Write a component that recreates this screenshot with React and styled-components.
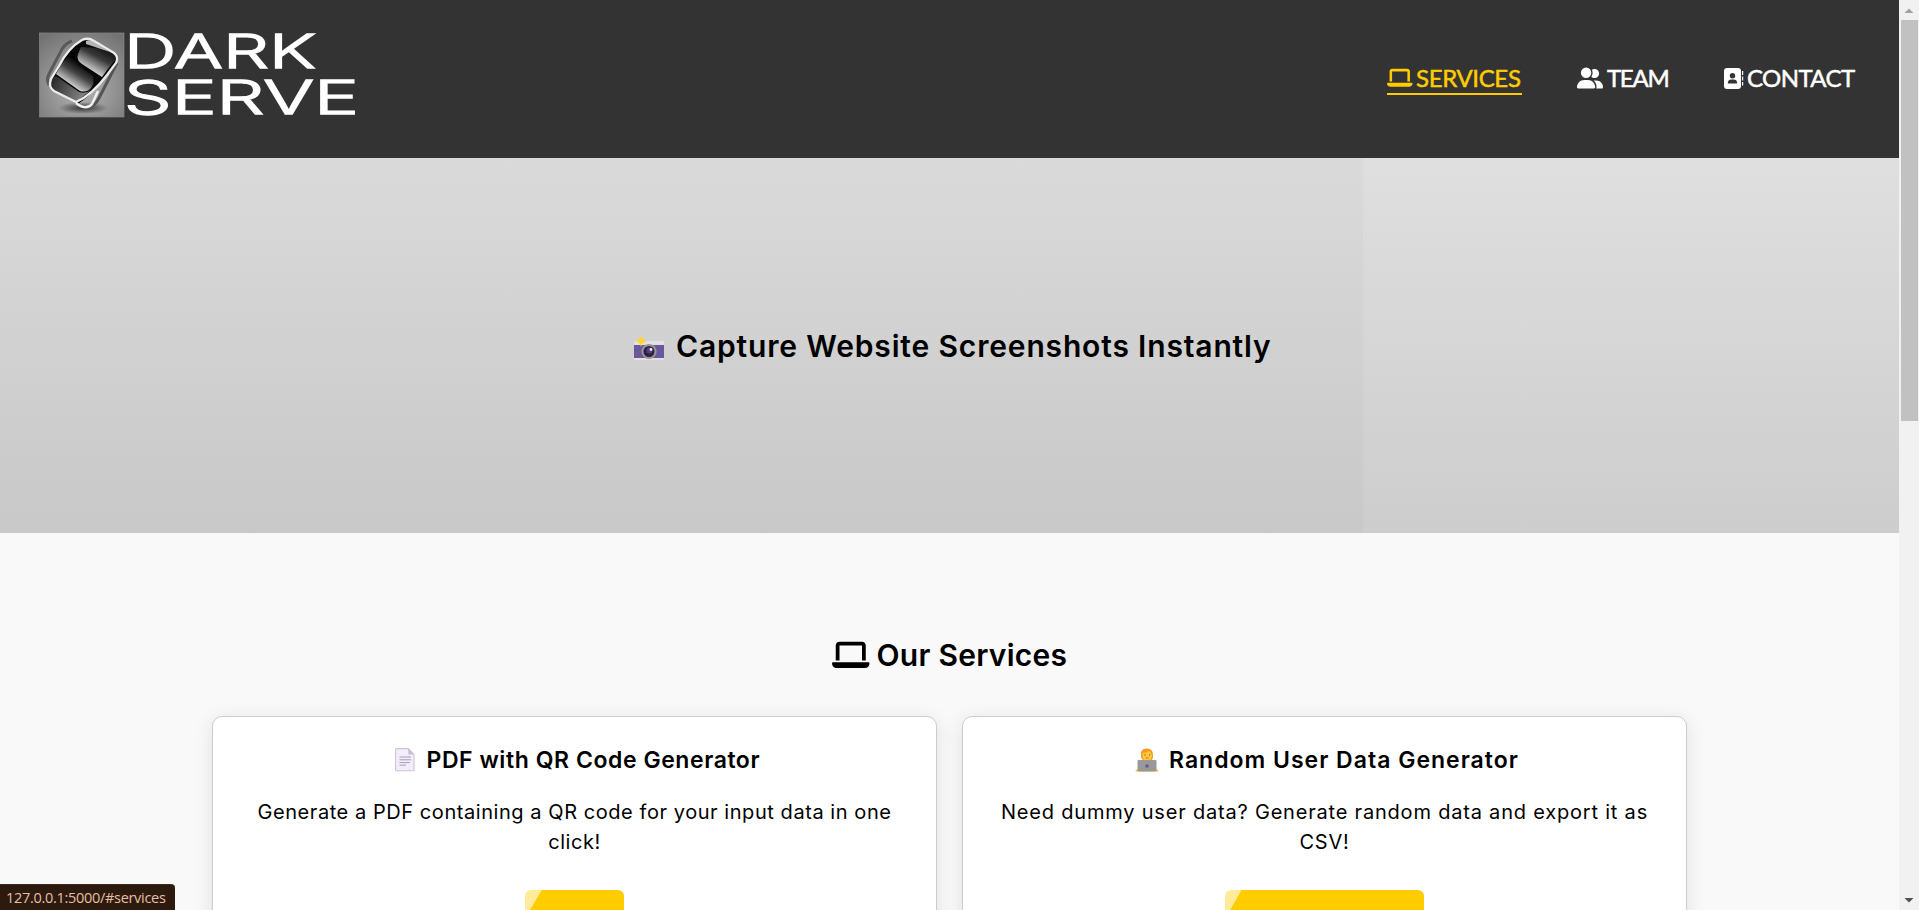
import React from "react";
import styled, { createGlobalStyle } from "styled-components";
import { FaLaptop, FaUserGroup } from "react-icons/fa6";

const GlobalStyle = createGlobalStyle`
  *, *::before, *::after { box-sizing: border-box; }
  body { margin: 0; background: #f9f9f9; color: #000; overflow: hidden; font-family: Inter, "Open Sans", sans-serif; }
  h1, h2, h3, p { margin: 0; }
  svg { display: block; flex: none; }
`;

const Shell = styled.div`
  display: flex;
  height: 910px;
  overflow: hidden;
`;

const Page = styled.div`
  position: relative;
  flex: 1;
  min-width: 0;
  height: 910px;
  overflow: hidden;
`;

const Header = styled.header`
  display: flex;
  justify-content: space-between;
  align-items: flex-start;
  height: 158px;
  padding: 19px 44px 0 35px;
  background: #333;
`;

const Nav = styled.nav`
  display: flex;
  gap: 55px;
  padding-top: 45px;
`;

const NavLink = styled.a`
  display: flex;
  align-items: center;
  width: ${(p) => p.$width}px;
  height: 31px;
  padding-bottom: 1px;
  color: ${(p) => (p.$active ? "#ffcc00" : "#fff")};
  border-bottom: 2px solid ${(p) => (p.$active ? "#ffcc00" : "transparent")};
  font: 400 24px/28px Lato, sans-serif;
  -webkit-text-stroke: 0.5px currentColor;
  letter-spacing: ${(p) => p.$spacing}px;
  white-space: nowrap;
`;

const NavIcon = styled.span`
  display: flex;
  width: ${(p) => p.$width}px;
  margin-right: 4px;
  -webkit-text-stroke: 0;
`;

const Hero = styled.section`
  display: flex;
  align-items: center;
  justify-content: center;
  height: 375px;
  background:
    linear-gradient(rgba(0, 0, 0, 0.022), rgba(0, 0, 0, 0.022)) 0 0 / 1363px 100% no-repeat,
    linear-gradient(#dfdfdf, #cdcdcd);
`;

const HeroTitle = styled.h1`
  display: flex;
  align-items: center;
  gap: 11px;
  width: 637px;
  margin-left: 4px;
  font-size: 30px;
  line-height: 44px;
  font-weight: 600;
  letter-spacing: 0.84px;
  white-space: nowrap;
`;

const Services = styled.section`
  display: flex;
  flex-direction: column;
  align-items: center;
  padding-top: 100px;
`;

const SectionTitle = styled.h2`
  display: flex;
  align-items: center;
  gap: 7px;
  width: 235px;
  margin-bottom: 39px;
  font-size: 30px;
  line-height: 44px;
  font-weight: 600;
  letter-spacing: 0.25px;
  white-space: nowrap;
`;

const Cards = styled.div`
  display: grid;
  grid-template-columns: 724.4px 724.4px;
  gap: 25.6px;
`;

const Card = styled.article`
  display: flex;
  flex-direction: column;
  align-items: center;
  height: 290px;
  padding-top: 27px;
  background: #fff;
  border: 1px solid #ccc;
  border-radius: 10px;
  box-shadow: 0 4px 20px rgba(0, 0, 0, 0.1);
`;

const CardTitle = styled.h3`
  display: flex;
  align-items: center;
  gap: ${(p) => p.$gap}px;
  width: ${(p) => p.$width}px;
  margin-bottom: 21px;
  font-size: 23px;
  line-height: 32px;
  font-weight: 600;
  letter-spacing: ${(p) => p.$spacing}px;
  white-space: nowrap;
`;

const CardText = styled.p`
  text-align: center;
  font-size: 20px;
  line-height: 30px;
  letter-spacing: ${(p) => p.$spacing}px;
  white-space: nowrap;
`;

const Button = styled.button`
  display: flex;
  justify-content: center;
  width: ${(p) => p.$width}px;
  height: 55px;
  flex: none;
  margin-top: 33px;
  padding: 14.5px 0 0;
  border: 0;
  border-radius: 6px;
  background: linear-gradient(120deg, #ffeb99 14px, #ffcc00 14.8px);
  color: #000;
  font: 500 20px/24px "Open Sans", sans-serif;
`;

const StatusBar = styled.div`
  position: absolute;
  left: 0;
  bottom: 0;
  width: 175px;
  height: 26px;
  padding-left: 6px;
  border-top: 1px solid #3d2a1e;
  border-top-right-radius: 4px;
  background: #2d1a0e;
  color: #e5bfa4;
  font: 400 14.5px/25px "Open Sans", sans-serif;
  letter-spacing: -0.3px;
  white-space: nowrap;
`;

const Scrollbar = styled.div`
  display: flex;
  flex-direction: column;
  align-items: center;
  justify-content: space-between;
  width: 20px;
  height: 910px;
  background: #f1f1f1;
`;

const Thumb = styled.div`
  width: 17px;
  height: 401px;
  margin-bottom: auto;
  background: #c1c1c1;
`;

const Logo = () => (
  <svg width="332" height="112" viewBox="35 19 332 112" aria-label="Dark Serve">
    <defs>
      <radialGradient id="tile" cx="50%" cy="65%" r="75%">
        <stop offset="0" stopColor="#b5b5b5" />
        <stop offset="0.5" stopColor="#949494" />
        <stop offset="1" stopColor="#737373" />
      </radialGradient>
      <linearGradient id="lower" x1="0" y1="0" x2="1" y2="0.3">
        <stop offset="0" stopColor="#222" />
        <stop offset="1" stopColor="#888" />
      </linearGradient>
      <linearGradient id="upper" gradientUnits="userSpaceOnUse" x1="86" y1="68" x2="98" y2="46">
        <stop offset="0" stopColor="#d0d0d0" />
        <stop offset="0.6" stopColor="#3a3a3a" />
        <stop offset="1" stopColor="#161616" />
      </linearGradient>
      <linearGradient id="band" gradientUnits="userSpaceOnUse" x1="66" y1="84" x2="80" y2="62">
        <stop offset="0" stopColor="#e2e2e2" />
        <stop offset="0.55" stopColor="#444" />
        <stop offset="1" stopColor="#000" />
      </linearGradient>
      <radialGradient id="shade">
        <stop offset="0" stopColor="#333" />
        <stop offset="1" stopColor="#333" stopOpacity="0" />
      </radialGradient>
    </defs>
    <rect x="39.500" y="33" width="84.500" height="84" fill="url(#tile)" stroke="#888" strokeWidth="0.7" />
    <ellipse cx="83" cy="108" rx="25" ry="6" fill="url(#shade)" />
    <path d="M72 41Q66 43 62 49L49 74Q46 80 49 85" fill="none" stroke="#5a5a5a" strokeWidth="3" />
    <path d="M117 63L99 98Q95 106 88 108" fill="none" stroke="#555" strokeWidth="3" />
    <path d="M82 40Q88 37 94 41L114 53Q119 57 116 63L107 75Q92 95 78 104L54 91Q48 87 51 79L59 66Q68 48 82 40Z" fill="#080808" />
    <path d="M81 47L78 54Q76 60 82 64L102 77L107 70L115 60Q117 55 112 52L98 48Z" fill="url(#upper)" />
    <path d="M86 41Q90 39 94 42L110 52Q98 48 86 44Z" fill="#b5b5b5" />
    <path d="M56 74L62 63L75 50Q73 62 81 67L93 76Q95 83 91 88Q87 93 80 91Z" fill="url(#band)" />
    <path d="M51 79L56 76L79 92Q86 94 91 90L76 102L54 90Q50 86 51 79Z" fill="url(#lower)" />
    <path d="M82 40Q88 37 94 41L114 53Q119 57 116 63L107 75Q92 95 76 102L54 91Q48 87 51 79L59 66Q68 48 82 40Z" fill="none" stroke="#ececec" strokeWidth="2.3" />
    <path d="M76 103Q86 111 92 104L98 91" fill="none" stroke="#f2f2f2" strokeWidth="2.4" />
    <g fill="#fff" stroke="#fff" strokeWidth="1.4" fontFamily="Inter, sans-serif" fontWeight="300" fontSize="47">
      <text x="124" y="67.5" textLength="192" lengthAdjust="spacingAndGlyphs">DARK</text>
      <text x="124" y="113.5" textLength="235" lengthAdjust="spacingAndGlyphs">SERVE</text>
    </g>
  </svg>
);

const Camera = () => (
  <svg width="32" height="32" viewBox="0 -2 32 32">
    <rect x="1" y="9" width="30" height="19" rx="1.5" fill="#e3e1e5" />
    <path d="M1 13h30v13H1z" fill="#69599b" />
    <circle cx="16" cy="19.5" r="7.6" fill="#9a9596" />
    <circle cx="16" cy="19.5" r="5.5" fill="#302044" />
    <circle cx="16.5" cy="18.5" r="3" fill="#50428a" />
    <circle cx="18" cy="17.5" r="1.4" fill="#efeaff" />
    <path d="M8 3.5L10 7L13.5 9L10 11L8 14.5L6 11L2.5 9L6 7Z" fill="#ffd33d" />
  </svg>
);

const Document = () => (
  <svg width="20" height="24" viewBox="0 0 20 24">
    <path d="M1.5.6h11.8L19 6.5v16.3H1.5Q.6 22.8.6 22V1.5Q.6.6 1.5.6Z" fill="#f2edf8" stroke="#cec3d8" strokeWidth="1.1" />
    <path d="M13.3.6V6.5H19Z" fill="#c9bdd4" />
    <path d="M4.5 9H16M4.5 11.8H16M4.5 14.6H15M4.5 17.2H11" stroke="#a99cb6" />
  </svg>
);

const Technologist = () => (
  <svg width="24" height="24" viewBox="0 0 24 24">
    <path d="M.5 23.5v-1Q1 21 4 21h16q3 0 3.5 1.5v1Z" fill="#ffc83d" />
    <path d="M6 9Q4.500 1 11 .5Q19 0 18 9Q18 13 12 13Q7 13 6 9Z" fill="#f59b23" />
    <path d="M7.500 5Q12 5 14 3Q17 5 17 8Q16 13 12 13Q8 13 7.500 8Z" fill="#ffc83d" />
    <circle cx="10" cy="7" r=".7" fill="#765c55" />
    <circle cx="14.500" cy="7" r=".7" fill="#765c55" />
    <path d="M10.700 10h3" stroke="#d36c30" />
    <rect x="2.500" y="12" width="19" height="11.500" rx="1" fill="#999" />
    <rect x="10.500" y="16.500" width="3" height="3" fill="#66558e" />
  </svg>
);

const AddressBook = () => (
  <svg width="20" height="21" viewBox="0 0 20 21">
    <path fillRule="evenodd" d="M3 0h11q3 0 3 3v15q0 3-3 3H3q-3 0-3-3V3Q0 0 3 0Zm5.500 5a2.700 2.700 0 1 0 0 5.400a2.700 2.700 0 1 0 0-5.400ZM7.300 11.500Q3.800 11.500 3.800 15.500h9.400q0-4-3.500-4Z" fill="currentColor" />
    <path d="M18.600 3v4M18.600 8.500v4M18.600 14v3.500" stroke="currentColor" strokeWidth="1.2" />
  </svg>
);

export default function App() {
  return (
    <Shell>
      <GlobalStyle />
      <Page>
        <Header>
          <Logo />
          <Nav>
            <NavLink $active $width={135} $spacing={-0.35}>
              <NavIcon $width={25}><FaLaptop size={25.5} /></NavIcon>SERVICES
            </NavLink>
            <NavLink $width={92} $spacing={-1.3}>
              <NavIcon $width={26}><FaUserGroup size={26} /></NavIcon>TEAM
            </NavLink>
            <NavLink $width={131} $spacing={-0.6}>
              <NavIcon $width={19}><AddressBook /></NavIcon>CONTACT
            </NavLink>
          </Nav>
        </Header>
        <Hero>
          <HeroTitle><Camera />Capture Website Screenshots Instantly</HeroTitle>
        </Hero>
        <Services>
          <SectionTitle><FaLaptop size={37.5} />Our Services</SectionTitle>
          <Cards>
            <Card>
              <CardTitle $width={360} $gap={12} $spacing={0.56}><Document />PDF with QR Code Generator</CardTitle>
              <CardText $spacing={0.56}>Generate a PDF containing a QR code for your input data in one<br />click!</CardText>
              <Button $width={99}>Try it</Button>
            </Card>
            <Card>
              <CardTitle $width={379} $gap={10} $spacing={1}><Technologist />Random User Data Generator</CardTitle>
              <CardText $spacing={0.8}>Need dummy user data? Generate random data and export it as<br />CSV!</CardText>
              <Button $width={199}>Generate Data</Button>
            </Card>
          </Cards>
        </Services>
        <StatusBar>127.0.0.1:5000/#services</StatusBar>
      </Page>
      <Scrollbar>
        <svg width="20" height="20" viewBox="0 0 20 20"><path d="M5.500 13L10 8.500L14.500 13Z" fill="#a3a3a3" /></svg>
        <Thumb />
        <svg width="20" height="20" viewBox="0 0 20 20"><path d="M5.500 8L10 12.500L14.500 8Z" fill="#505050" /></svg>
      </Scrollbar>
    </Shell>
  );
}
